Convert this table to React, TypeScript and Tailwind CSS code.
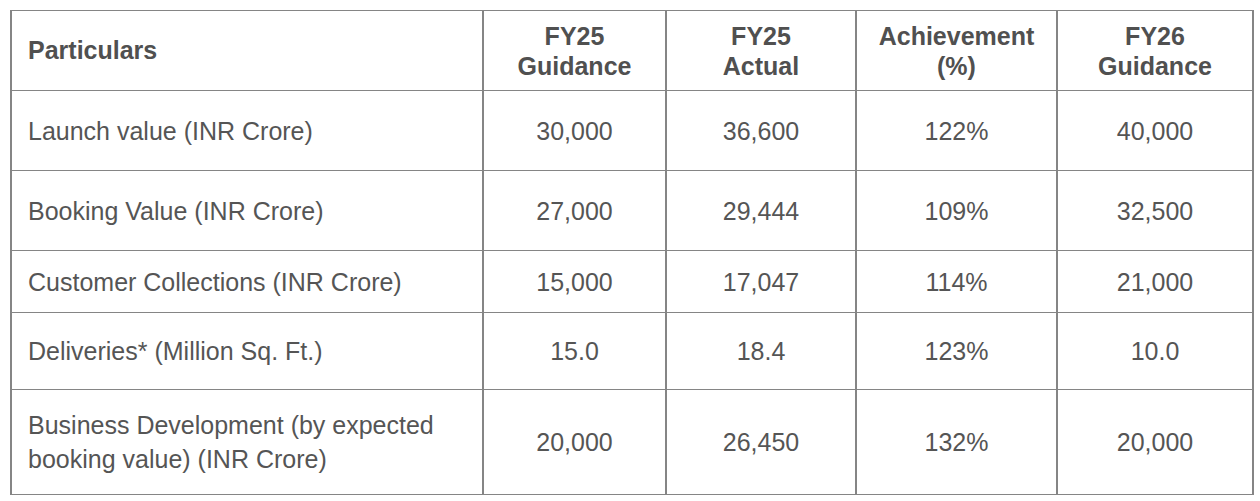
// App.tsx
// FY25 guidance vs actual table

type Row = {
  label: string;
  guidance: string;
  actual: string;
  achievement: string;
  next: string;
  height: string;
};

const rows: Row[] = [
  { label: 'Launch value (INR Crore)', guidance: '30,000', actual: '36,600', achievement: '122%', next: '40,000', height: 'h-[80px]' },
  { label: 'Booking Value (INR Crore)', guidance: '27,000', actual: '29,444', achievement: '109%', next: '32,500', height: 'h-[80px]' },
  { label: 'Customer Collections (INR Crore)', guidance: '15,000', actual: '17,047', achievement: '114%', next: '21,000', height: 'h-[62px]' },
  { label: 'Deliveries* (Million Sq. Ft.)', guidance: '15.0', actual: '18.4', achievement: '123%', next: '10.0', height: 'h-[77px]' },
  {
    label: 'Business Development (by expected booking value) (INR Crore)',
    guidance: '20,000',
    actual: '26,450',
    achievement: '132%',
    next: '20,000',
    height: 'h-[105px]',
  },
];

const cell = 'border-x-2 border-y border-[#858585] p-0';

export default function App() {
  return (
    <div
      className="min-h-screen bg-white pl-[10px] pt-[10px] text-[25px] text-[#555555]"
      style={{ fontFamily: '"Liberation Sans", Arial, sans-serif' }}
    >
      <table className="table-fixed border-collapse w-[1242px]">
        <colgroup>
          <col className="w-[472px]" />
          <col className="w-[183px]" />
          <col className="w-[190px]" />
          <col className="w-[201px]" />
          <col className="w-[196px]" />
        </colgroup>
        <thead>
          <tr className="h-[80px] font-bold text-[#505050] leading-[30px]">
            <th className={`${cell} text-left pl-[16px] pb-[2px]`}>Particulars</th>
            <th className={`${cell} text-center`}>
              FY25
              <br />
              Guidance
            </th>
            <th className={`${cell} text-center`}>
              FY25
              <br />
              Actual
            </th>
            <th className={`${cell} text-center`}>
              Achievement
              <br />
              (%)
            </th>
            <th className={`${cell} text-center`}>
              FY26
              <br />
              Guidance
            </th>
          </tr>
        </thead>
        <tbody>
          {rows.map((r) => (
            <tr key={r.label} className={`${r.height} leading-[34px]`}>
              <td className={`${cell} pl-[16px] pr-[20px]`}>{r.label}</td>
              <td className={`${cell} text-center`}>{r.guidance}</td>
              <td className={`${cell} text-center`}>{r.actual}</td>
              <td className={`${cell} text-center`}>{r.achievement}</td>
              <td className={`${cell} text-center`}>{r.next}</td>
            </tr>
          ))}
        </tbody>
      </table>
    </div>
  );
}
